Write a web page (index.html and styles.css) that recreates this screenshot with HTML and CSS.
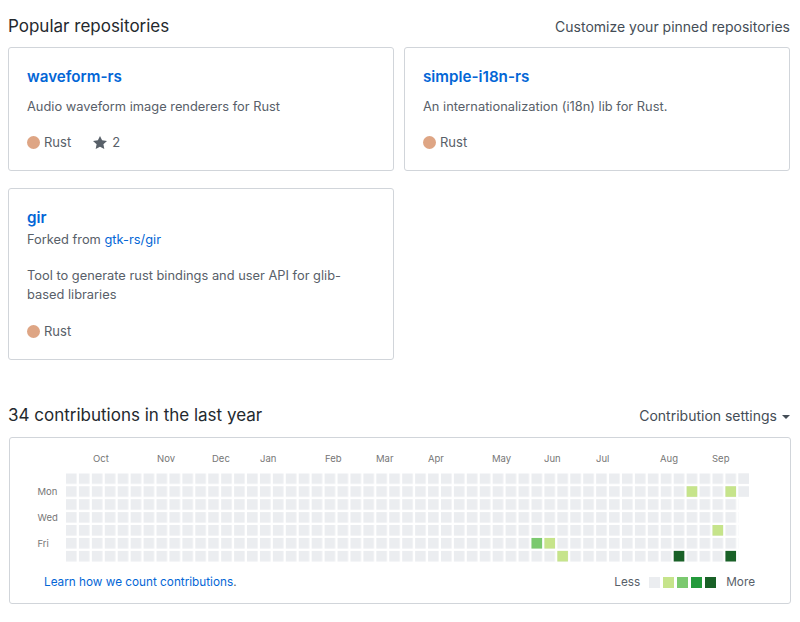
FILE: index.html
```html
<!DOCTYPE html>
<html lang="en">
<head>
<meta charset="utf-8">
<title>Profile</title>
<link rel="stylesheet" href="styles.css">
</head>
<body>
<div class="page">
  <div class="section-head">
    <h2 class="section-title">Popular repositories</h2>
    <a class="head-link" href="#">Customize your pinned repositories</a>
  </div>

  <ol class="pinned">
    <li class="card">
      <a class="repo-name" href="#">waveform-rs</a>
      <p class="repo-desc">Audio waveform image renderers for Rust</p>
      <p class="repo-meta">
        <span class="lang"><span class="lang-dot"></span>Rust</span>
        <span class="stars">
          <svg class="star" width="14" height="16" viewBox="0 0 14 16"><path d="M14 6l-4.9-.64L7 1 4.9 5.36 0 6l3.6 3.26L2.67 14 7 11.67 11.33 14l-.93-4.74L14 6z"/></svg>2
        </span>
      </p>
    </li>
    <li class="card">
      <a class="repo-name" href="#">simple-i18n-rs</a>
      <p class="repo-desc">An internationalization (i18n) lib for Rust.</p>
      <p class="repo-meta">
        <span class="lang"><span class="lang-dot"></span>Rust</span>
      </p>
    </li>
    <li class="card">
      <a class="repo-name" href="#">gir</a>
      <p class="repo-fork">Forked from <a href="#">gtk-rs/gir</a></p>
      <p class="repo-desc repo-desc-forked">Tool to generate rust bindings and user API for glib-based libraries</p>
      <p class="repo-meta repo-meta-forked">
        <span class="lang"><span class="lang-dot"></span>Rust</span>
      </p>
    </li>
  </ol>

  <div class="section-head contrib-head">
    <h2 class="section-title">34 contributions in the last year</h2>
    <a class="head-link settings" href="#">Contribution settings<span class="caret"></span></a>
  </div>

  <div class="graph-box">
    <svg class="calendar" width="730" height="116" viewBox="0 0 730 116">
      <defs>
        <pattern id="day" x="36" y="26.3" width="12.93" height="12.93" patternUnits="userSpaceOnUse">
          <rect width="10.6" height="10.6" fill="#ebedf0"/>
        </pattern>
      </defs>
      <rect x="36" y="26.3" width="672.36" height="90.51" fill="url(#day)"/>
      <rect x="708.36" y="26.3" width="10.6" height="10.6" fill="#ebedf0"/>
      <rect x="708.36" y="39.23" width="10.6" height="10.6" fill="#ebedf0"/>

      <rect x="656.64" y="39.23" width="10.6" height="10.6" fill="#c6e48b"/>
      <rect x="695.43" y="39.23" width="10.6" height="10.6" fill="#c6e48b"/>
      <rect x="682.5" y="78.02" width="10.6" height="10.6" fill="#c6e48b"/>
      <rect x="501.48" y="90.95" width="10.6" height="10.6" fill="#7bc96f"/>
      <rect x="514.41" y="90.95" width="10.6" height="10.6" fill="#c6e48b"/>
      <rect x="527.34" y="103.88" width="10.6" height="10.6" fill="#c6e48b"/>
      <rect x="643.71" y="103.88" width="10.6" height="10.6" fill="#196127"/>
      <rect x="695.43" y="103.88" width="10.6" height="10.6" fill="#196127"/>

      <g class="month">
        <text x="63" y="15">Oct</text>
        <text x="127" y="15">Nov</text>
        <text x="182" y="15">Dec</text>
        <text x="230" y="15">Jan</text>
        <text x="295" y="15">Feb</text>
        <text x="346" y="15">Mar</text>
        <text x="398" y="15">Apr</text>
        <text x="462" y="15">May</text>
        <text x="514" y="15">Jun</text>
        <text x="566" y="15">Jul</text>
        <text x="630" y="15">Aug</text>
        <text x="682" y="15">Sep</text>
      </g>
      <g class="wday">
        <text x="7.5" y="48">Mon</text>
        <text x="7.5" y="74">Wed</text>
        <text x="7.5" y="100">Fri</text>
      </g>
    </svg>

    <div class="graph-foot">
      <p class="learn"><a href="#">Learn how we count contributions</a>.</p>
      <div class="legend">
        <span class="legend-label">Less</span>
        <ul class="legend-scale">
          <li class="lv0"></li>
          <li class="lv1"></li>
          <li class="lv2"></li>
          <li class="lv3"></li>
          <li class="lv4"></li>
        </ul>
        <span class="legend-label">More</span>
      </div>
    </div>
  </div>
</div>
</body>
</html>
```

FILE: styles.css
```css
* { box-sizing: border-box; }

body {
  margin: 0;
  background: #ffffff;
  color: #24292e;
  font-family: Inter, "Noto Sans", "Liberation Sans", sans-serif;
}

a { color: #0366d6; text-decoration: none; }

.page {
  width: 790px;
  padding: 14px 0 0 8px;
}

.section-head {
  display: flex;
  justify-content: space-between;
  align-items: baseline;
  height: 24px;
}

.section-title {
  margin: 0;
  font-size: 17px;
  font-weight: 400;
  line-height: 24px;
  color: #24292e;
}

.head-link {
  font-size: 14px;
  line-height: 24px;
  color: #444d56;
}

.pinned {
  list-style: none;
  margin: 9px 0 0;
  padding: 0;
  display: grid;
  grid-template-columns: 1fr 1fr;
  column-gap: 10px;
  row-gap: 17px;
}

.card {
  border: 1px solid #d1d5da;
  border-radius: 3px;
  padding: 19px 18px 19px;
}

.repo-name {
  display: block;
  font-size: 15.2px;
  font-weight: 600;
  line-height: 20px;
}

.repo-desc {
  margin: 10px 0 0;
  font-size: 12.85px;
  line-height: 19px;
  color: #586069;
}

.repo-fork {
  margin: 2px 0 0;
  font-size: 12.85px;
  line-height: 19px;
  color: #586069;
}

.repo-desc-forked { margin-top: 17px; }

.repo-meta {
  margin: 18px 0 0;
  display: flex;
  align-items: center;
  gap: 22px;
  font-size: 13px;
  line-height: 17px;
  color: #586069;
}

.repo-meta-forked { margin-top: 19px; }

.lang {
  display: flex;
  align-items: center;
  gap: 4px;
}

.lang-dot {
  width: 13px;
  height: 13px;
  border-radius: 50%;
  background: #dea584;
}

.stars {
  display: flex;
  align-items: center;
  gap: 5px;
}

.star { fill: #586069; }

.contrib-head { margin-top: 43px; }

.settings {
  display: flex;
  align-items: center;
  gap: 5px;
}

.caret {
  width: 0;
  height: 0;
  border-top: 4px solid #444d56;
  border-left: 4px solid transparent;
  border-right: 4px solid transparent;
  margin-top: 2px;
}

.graph-box {
  margin-top: 10px;
  width: 782px;
  margin-left: 1px;
  border: 1px solid #d1d5da;
  border-radius: 3px;
  padding: 9px 0 12px 20px;
}

.calendar { display: block; }

.month text,
.wday text {
  font-family: Inter, "Liberation Sans", sans-serif;
  font-size: 9.5px;
  fill: #767676;
}

.graph-foot {
  margin-top: 10px;
  display: flex;
  justify-content: space-between;
  align-items: center;
  padding: 0 35px 0 14px;
  height: 18px;
}

.learn {
  margin: 0;
  font-size: 11.75px;
  color: #586069;
}

.legend {
  display: flex;
  align-items: center;
  font-size: 11.75px;
  color: #586069;
}

.legend-scale {
  list-style: none;
  margin: 0 10px 0 9px;
  padding: 0;
  display: flex;
  gap: 3px;
}

.legend-scale li {
  width: 11px;
  height: 11px;
}

.lv0 { background: #ebedf0; }
.lv1 { background: #c6e48b; }
.lv2 { background: #7bc96f; }
.lv3 { background: #239a3b; }
.lv4 { background: #196127; }
```
